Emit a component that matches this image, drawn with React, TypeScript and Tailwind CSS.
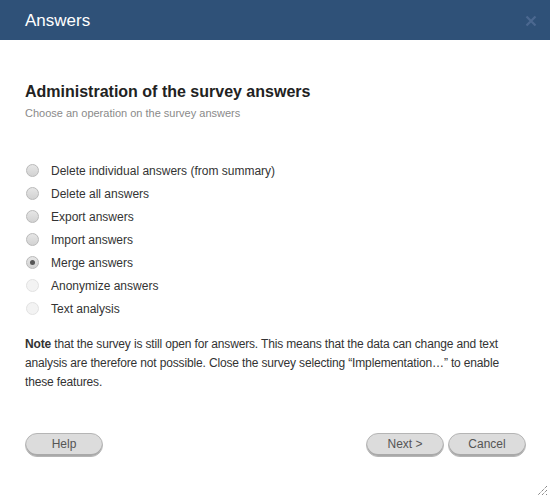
const options = [
  { label: "Delete individual answers (from summary)", checked: false, disabled: false },
  { label: "Delete all answers", checked: false, disabled: false },
  { label: "Export answers", checked: false, disabled: false },
  { label: "Import answers", checked: false, disabled: false },
  { label: "Merge answers", checked: true, disabled: false },
  { label: "Anonymize answers", checked: false, disabled: true },
  { label: "Text analysis", checked: false, disabled: true },
];

function Radio({ checked, disabled }: { checked: boolean; disabled: boolean }) {
  return (
    <span
      className={
        disabled
          ? "w-[13px] h-[13px] rounded-full border border-[#e2e2e2] bg-[#f3f3f3] flex items-center justify-center"
          : "w-[13px] h-[13px] rounded-full border border-[#b9b9b9] bg-gradient-to-b from-[#e6e6e6] to-[#d2d2d2] flex items-center justify-center"
      }
    >
      {checked && <span className="w-[5px] h-[5px] rounded-full bg-[#555]" />}
    </span>
  );
}

function Button({ children }: { children: React.ReactNode }) {
  return (
    <button className="w-[78px] h-[24px] rounded-full bg-[#dcdcdc] border border-[#b5b5b5] shadow-[inset_0_-2px_0_#a9a9a9] text-[12px] text-[#555] leading-none pb-[2px]">
      {children}
    </button>
  );
}

export default function App() {
  return (
    <div className="w-[550px] h-[498px] bg-white flex flex-col relative font-['Liberation_Sans',Arial,sans-serif]">
      <div className="h-[40px] bg-[#2f5178] flex items-center justify-between pl-[25px] pr-[13px]">
        <span className="text-white text-[17px] leading-none">Answers</span>
        <svg width="12" height="12" viewBox="0 0 12 12" className="mt-[2px]">
          <path d="M1.5 1.5 L10.5 10.5 M10.5 1.5 L1.5 10.5" stroke="#4b6890" strokeWidth="2.2" />
        </svg>
      </div>

      <div className="px-[25px] pt-[43px]">
        <h1 className="text-[16px] font-bold text-[#222] leading-[18px]">Administration of the survey answers</h1>
        <p className="text-[11px] text-[#8a8a8a] mt-[5px] leading-[14px]">Choose an operation on the survey answers</p>

        <div className="mt-[39px] flex flex-col">
          {options.map((o) => (
            <label key={o.label} className="flex items-center h-[23px]">
              <span className="w-[26px] pl-[1px]">
                <Radio checked={o.checked} disabled={o.disabled} />
              </span>
              <span className="text-[12px] text-[#333]">{o.label}</span>
            </label>
          ))}
        </div>

        <p className="mt-[15px] text-[12px] text-[#333] leading-[19px] tracking-[-0.15px]">
          <b>Note</b> that the survey is still open for answers. This means that the data can change and text analysis are therefore not possible. Close the survey selecting “Implementation…” to enable these features.
        </p>

        <div className="mt-[41px] flex items-center">
          <Button>Help</Button>
          <div className="flex-1" />
          <div className="flex gap-[4px] mr-[-1px]">
            <Button>Next &gt;</Button>
            <Button>Cancel</Button>
          </div>
        </div>
      </div>

      <svg width="12" height="12" viewBox="0 0 12 12" className="absolute right-[2px] bottom-[2px]">
        <path d="M11 2 L2 11 M11 6 L6 11 M11 10 L10 11" stroke="#555" strokeWidth="1" strokeDasharray="1 1" />
      </svg>
    </div>
  );
}
